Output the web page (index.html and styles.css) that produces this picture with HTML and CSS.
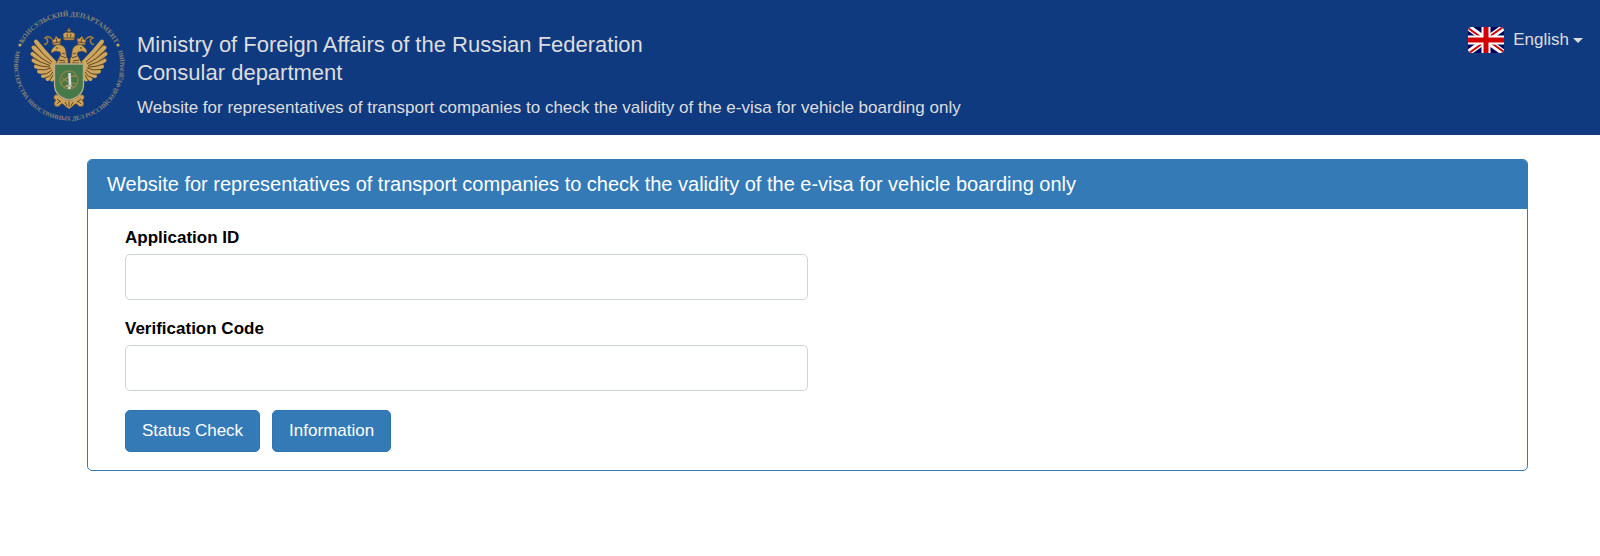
FILE: index.html
```
<!DOCTYPE html>
<html lang="en">
<head>
    <meta charset="UTF-8">
    <meta name="viewport" content="width=device-width, initial-scale=1.0">
    <title>E-visa validity check</title>
    <link rel="stylesheet" href="styles.css">
</head>
<body>

    <header class="header">
        <svg class="emblem" viewBox="13 11 112 112" role="img" aria-label="Consular department emblem">
            <defs>
                <path id="arc-top" d="M20 50 A52.5 52.5 0 0 1 118 50"/>
                <path id="arc-bottom" d="M16.2 50.5 A55 55 0 1 0 121.3 48"/>
                <g id="wing">
                    <path class="wing-base" d="M58 62 Q50 58 46 51 L36 41 Q31 54 35 66 Q42 78 54 80 Z"/>
                    <path class="feather" d="M54 62 Q45 53 36 41.5"/>
                    <path class="feather" d="M53 63 Q42 56 33.5 47.5"/>
                    <path class="feather" d="M52 65 Q42 61 32.5 54"/>
                    <path class="feather" d="M52 66 Q42 65 33.5 60.5"/>
                    <path class="feather" d="M53 67 Q44 69 36 66.5"/>
                    <path class="feather" d="M53 68 Q46 73 39 71.5"/>
                    <path class="feather" d="M53 69 Q49 76 43 76"/>
                    <path class="feather" d="M53 71 Q51 78 47.5 79"/>
                    <path class="feather" d="M54 73 L52 79.5"/>
                    <path class="feather-dark" d="M52 62 Q42 54 34 43.5M51 64 Q41 59 32 50.5M50 65.5 Q41 63 32 57.5M50 67 Q42 67 34 64M51 68 Q45 71 37 69.5M52 70 Q47 75 41 74.5M53 72 Q50 77.5 45 78M53 75 L50 80"/>
                </g>
                <g id="head">
                    <path class="gold" d="M68 64 L56 64 L59 58 Q62 54 60 52 L56 51 L51 53 Q51 49 54 47 Q57 43 61 45 Q66 47 66 53 Q66 57 68 59 Z"/>
                    <path class="feather-dark" d="M59 60 L65 61M61 56 L66 58M62 53 L65 54M59 63 L66 63"/>
                    <circle class="dark" cx="57" cy="48" r="0.8"/>
                    <path class="gold" d="M53 45 L52 39 L54 40 L56 36 L59 39 L61 38 L60 44 Z"/>
                    <path class="feather-dark" d="M53 43 L60 42M56 38 L57 42"/>
                    <path class="ribbon" d="M52 39 Q48 35 45 38 Q49 39 47 43 Q46 45 44 44"/>
                </g>
            </defs>

            <text class="emblem-text emblem-text-top"><textPath href="#arc-top" startOffset="50%">КОНСУЛЬСКИЙ ДЕПАРТАМЕНТ</textPath></text>
            <text class="emblem-text"><textPath href="#arc-bottom">МИНИСТЕРСТВА ИНОСТРАННЫХ ДЕЛ РОССИЙСКОЙ ФЕДЕРАЦИИ</textPath></text>
            <circle class="emblem-dot" cx="20" cy="45" r="1.6"/>
            <circle class="emblem-dot" cx="118" cy="45" r="1.6"/>

            <use href="#wing"/>
            <use href="#wing" transform="translate(138 0) scale(-1 1)"/>
            <use href="#head"/>
            <use href="#head" transform="translate(138 0) scale(-1 1)"/>

            <!-- big crown -->
            <path class="gold" d="M64 40 L63 34 Q66 31 68.4 33 L68.4 31 L67 31 L67 30 L68.4 30 L68.4 28 L69.6 28 L69.6 30 L71 30 L71 31 L69.6 31 L69.6 33 Q72 31 75 34 L74 40 Z"/>
            <path class="feather-dark" d="M64 38 L74 38M67 34 L67.5 37M71 34 L70.5 37"/>

            <!-- tail -->
            <path class="gold" d="M54 96 Q57 93 60 97 L69 101 L78 97 Q81 93 84 96 Q85 99 82 100 Q85 103 83 106 Q79 108 77 104 Q75 103 73 106 L69 109 L65 106 Q63 103 61 104 Q59 108 55 106 Q53 103 56 100 Q53 99 54 96 Z"/>
            <path class="feather-dark" d="M57 99 L61 102M57 104 L60 101M65 102 L67 106M69 102 L69 107M73 102 L71 106M81 99 L77 102M81 104 L78 101"/>

            <!-- shield -->
            <path class="shield" d="M54.5 64 H83.5 V85 Q83 97 69 100 Q55 97 54.5 85 Z"/>
            <circle class="shield-ring" cx="69" cy="80" r="9"/>
            <path class="shield-scroll" d="M61 83 Q66 76 76 76M62 78 Q69 83 76 84M64 87 Q70 83 75 88"/>
            <path class="sword" d="M69.5 73 L70 85 L69 89"/>
            <path class="sword-hilt" d="M66 86 L72 86"/>
        </svg>

        <div class="header-text">
            <h1 class="header-title">Ministry of Foreign Affairs of the Russian Federation<br>Consular department</h1>
            <p class="header-sub">Website for representatives of transport companies to check the validity of the e-visa for vehicle boarding only</p>
        </div>

        <div class="lang">
            <svg class="flag" viewBox="0 0 36 26" aria-hidden="true">
                <rect width="36" height="26" fill="#00005f"/>
                <path d="M0 0 L36 26 M36 0 L0 26" stroke="#fff" stroke-width="6"/>
                <path d="M0 1 L14 11 M36 25 L22 15 M35 0 L21 10 M1 26 L15 16" stroke="#d30000" stroke-width="2"/>
                <path d="M18 0 V26 M0 13 H36" stroke="#fff" stroke-width="9"/>
                <path d="M18 0 V26 M0 13 H36" stroke="#d30000" stroke-width="5"/>
            </svg>
            <select class="lang-select" aria-label="Language">
                <option selected>English</option>
                <option>Русский</option>
            </select>
        </div>
    </header>

    <main class="container">
        <section class="panel">
            <h2 class="panel-heading">Website for representatives of transport companies to check the validity of the e-visa for vehicle boarding only</h2>
            <form class="panel-body">
                <div class="form-group">
                    <label for="app-id">Application ID</label>
                    <input type="text" id="app-id" class="form-control">
                </div>
                <div class="form-group">
                    <label for="ver-code">Verification Code</label>
                    <input type="text" id="ver-code" class="form-control">
                </div>
                <div class="buttons">
                    <button type="submit" class="btn">Status Check</button>
                    <button type="button" class="btn">Information</button>
                </div>
            </form>
        </section>
    </main>

</body>
</html>
```
FILE: styles.css
```
* { box-sizing: border-box; }
body { margin: 0; background: #fff; color: #000; font-family: "Liberation Sans", Arial, sans-serif; font-size: 17px; line-height: 24px; }

.header { display: flex; align-items: flex-start; background: #103a80; color: #ddd; padding: 11px 17px 12px 13px; }
.emblem { width: 112px; height: 112px; flex: none; overflow: visible; }
.header-text { flex: 1; padding: 20px 0 0 12px; }
.header-title { margin: 0; font-size: 22px; line-height: 28px; font-weight: normal; }
.header-sub { margin: 9px 0 0; }

/* emblem colours */
.emblem-text { font-family: "Liberation Serif", serif; font-weight: bold; font-size: 6px; fill: #8c8672; }
.emblem-text-top { font-size: 7px; text-anchor: middle; }
.emblem-dot { fill: #c9a45c; }
.wing-base { fill: #7d6136; }
.feather { fill: none; stroke: #cfa65e; stroke-width: 4; stroke-linecap: round; }
.feather-dark { fill: none; stroke: #5f4825; stroke-width: 1; }
.gold { fill: #cda258; stroke: #6e5229; stroke-width: 0.6; }
.dark { fill: #3a2b17; }
.ribbon { fill: none; stroke: #a07b3e; stroke-width: 1.6; }
.shield { fill: #467a48; stroke: #b9a98a; stroke-width: 1.4; }
.shield-ring { fill: #4c7544; stroke: #82864e; stroke-width: 1.4; }
.shield-scroll { fill: none; stroke: #8f8a50; stroke-width: 1.4; }
.sword { fill: none; stroke: #d5dde2; stroke-width: 2.6; }
.sword-hilt { stroke: #a9aa86; stroke-width: 1.6; }

.lang { display: flex; align-items: center; margin-top: 16px; }
.flag { width: 36px; height: 26px; border-radius: 4px; margin-right: 9px; }
.lang-select { appearance: none; field-sizing: content; border: 0; padding: 0; background: none; color: inherit; font: inherit; cursor: pointer; }
.lang-select option { color: #000; }
.lang::after { content: ""; margin-left: 4px; border: 5px solid transparent; border-top-color: #ddd; border-bottom: 0; pointer-events: none; }

.container { padding: 24px 72px 24px 87px; }
.panel { border: 1px solid #337ab7; border-radius: 5px; overflow: hidden; }
.panel-heading { margin: 0; padding: 12px 19px 13px; background: #337ab7; color: #fff; font-size: 20px; line-height: 24px; font-weight: normal; }
.panel-body { padding: 17px 37px 18px; }

.form-group { width: 50%; margin-bottom: 17px; }
.form-group label { display: block; margin-bottom: 4px; font-weight: bold; }
.form-control { display: block; width: 100%; height: 46px; padding: 8px 14px; border: 1px solid #ccd3da; border-radius: 5px; background: #fff; font: inherit; }

.buttons { display: flex; gap: 12px; padding-top: 2px; }
.btn { height: 42px; padding: 0 16px; border: 1px solid #2e75b0; border-radius: 5px; background: #337ab7; color: #fff; font: inherit; cursor: pointer; }
```
